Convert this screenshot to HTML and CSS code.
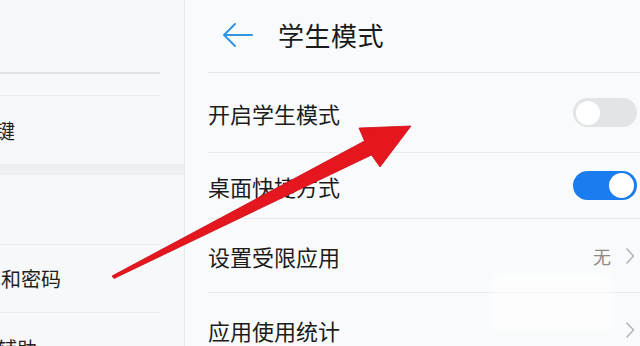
FILE: index.html
```html
<!DOCTYPE html>
<html lang="zh-CN">
<head>
<meta charset="utf-8">
<title>学生模式</title>
<link rel="stylesheet" href="styles.css">
</head>
<body>
<div class="screen">
  <aside class="side">
    <div class="side-top"></div>
    <div class="side-sub"></div>
    <div class="side-item side-item--key"><span class="side-label side-label--key">导航键</span></div>
    <div class="side-band"></div>
    <div class="side-blank"></div>
    <div class="side-item side-item--pwd"><span class="side-label side-label--pwd">锁屏和密码</span></div>
    <div class="side-item side-item--last"><span class="side-label side-label--help">智能辅助</span></div>
  </aside>
  <main class="panel">
    <header class="head">
      <svg class="back" viewBox="0 0 32 26" width="32" height="26" aria-hidden="true">
        <path d="M30 13H3M13 2L2 13l11 11" fill="none" stroke="#3195e0" stroke-width="2" stroke-linecap="round" stroke-linejoin="round"/>
      </svg>
      <h1 class="title">学生模式</h1>
    </header>
    <div class="row row--a">
      <span class="label">开启学生模式</span>
      <span class="switch"><span class="knob"></span></span>
    </div>
    <div class="row row--b">
      <span class="label">桌面快捷方式</span>
      <span class="switch switch--on"><span class="knob"></span></span>
    </div>
    <div class="row row--c">
      <span class="label">设置受限应用</span>
      <span class="extra">
        <span class="value">无</span>
        <svg class="chev" viewBox="0 0 10 18" width="10" height="18" aria-hidden="true"><path d="M1.5 1.5l7 7.5-7 7.5" fill="none" stroke="#b4b4b4" stroke-width="1.6" stroke-linejoin="round"/></svg>
      </span>
    </div>
    <div class="row row--d">
      <span class="label">应用使用统计</span>
      <span class="extra">
        <svg class="chev" viewBox="0 0 10 18" width="10" height="18" aria-hidden="true"><path d="M1.5 1.5l7 7.5-7 7.5" fill="none" stroke="#b4b4b4" stroke-width="1.6" stroke-linejoin="round"/></svg>
      </span>
    </div>
  </main>
  <div class="watermark"></div>
  <svg class="arrow" viewBox="0 0 640 346" width="640" height="346" aria-hidden="true">
    <polygon points="112,276 364.5,141 359,128 411,126 380,167 371.5,155 114,278.5" fill="#e5161d" stroke="#c8101a" stroke-width="0.8" stroke-linejoin="round"/>
  </svg>
</div>
</body>
</html>
```

FILE: styles.css
```css
* { box-sizing: border-box; margin: 0; padding: 0; }

html, body {
  width: 640px;
  height: 346px;
  overflow: hidden;
  background: #f8f9fb;
}

body {
  font-family: "Noto Sans CJK SC", "Noto Sans", sans-serif;
  color: #1c1c1c;
}

.screen {
  position: relative;
  display: flex;
  width: 640px;
  height: 346px;
  overflow: hidden;
}

/* left pane */
.side {
  width: 185px;
  flex: 0 0 185px;
  background: #f7f8fa;
  border-right: 1px solid #e8e9ec;
  display: flex;
  flex-direction: column;
  overflow: hidden;
}

.side-top {
  height: 74px;
  flex: 0 0 74px;
  margin-right: 24px;
  border-bottom: 2px solid #e1e2e4;
}

.side-sub {
  height: 22px;
  flex: 0 0 22px;
  margin-right: 24px;
  border-bottom: 1px solid #ebecee;
}

.side-item {
  display: flex;
  align-items: center;
  margin-right: 24px;
  white-space: nowrap;
  font-size: 20px;
  color: #1f1f1f;
}

.side-item--key { height: 68px; flex: 0 0 68px; }
.side-item--pwd { height: 68px; flex: 0 0 68px; border-bottom: 1px solid #ebecee; }
.side-item--last { height: 60px; flex: 0 0 60px; align-items: flex-start; padding-top: 21px; }

.side-label--key { margin-left: -45px; }
.side-label--pwd { margin-left: -39px; }
.side-label--help { margin-left: -43px; }

.side-band {
  height: 11px;
  flex: 0 0 11px;
  background: #eeeff1;
}

.side-blank {
  height: 70px;
  flex: 0 0 70px;
  margin-right: 24px;
  border-bottom: 1px solid #ebecee;
}

/* right pane */
.panel {
  flex: 1;
  display: flex;
  flex-direction: column;
  padding-left: 23px;
  background: #f9fafb;
}

.head {
  height: 73px;
  flex: 0 0 73px;
  display: flex;
  align-items: center;
  padding-left: 14px;
  padding-bottom: 3px;
  border-bottom: 1px solid #e6e7e9;
}

.back { display: block; margin-right: 24px; }

.title {
  font-size: 26px;
  font-weight: 400;
  color: #1a1a1a;
  letter-spacing: 0.5px;
}

.row {
  display: flex;
  align-items: center;
  justify-content: space-between;
  padding-right: 3px;
  border-bottom: 1px solid #e8e9eb;
}

.row--a { height: 80px; flex: 0 0 80px; }
.row--b { height: 66px; flex: 0 0 66px; }
.row--c { height: 74px; flex: 0 0 74px; }
.row--d { height: 74px; flex: 0 0 74px; border-bottom: none; }

.label {
  font-size: 22px;
  color: #1c1c1c;
  white-space: nowrap;
}

.switch {
  width: 64px;
  height: 29px;
  border-radius: 15px;
  background: #e3e4e6;
  display: flex;
  align-items: center;
  padding: 0 3px;
}

.knob {
  width: 24px;
  height: 24px;
  border-radius: 50%;
  background: #ffffff;
}

.switch--on {
  background: #1b7cf0;
  justify-content: flex-end;
}

.switch--on .knob {
  width: 25px;
  height: 25px;
}

.extra {
  display: flex;
  align-items: center;
  gap: 14px;
  padding-right: 2px;
}

.value {
  font-size: 18px;
  color: #8a8a8a;
}

.chev { display: block; }

.watermark {
  position: absolute;
  left: 492px;
  top: 272px;
  width: 120px;
  height: 58px;
  background: rgba(255, 255, 255, 0.6);
  filter: blur(5px);
}

.arrow {
  position: absolute;
  left: 0;
  top: 0;
  pointer-events: none;
}
```
